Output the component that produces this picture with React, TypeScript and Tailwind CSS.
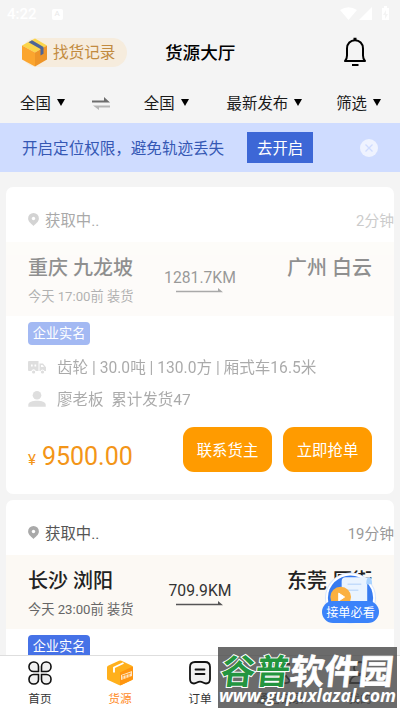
import type { ReactNode } from "react";
import { clsx } from "clsx";

interface Order {
  id: number;
  age: string;
  from: string;
  to: string;
  distance: string;
  loading: string;
  cargo?: string;
  owner?: string;
  price?: string;
  viewed: boolean;
}

const ORDERS: Order[] = [
  {
    id: 1, age: "2分钟", from: "重庆 九龙坡", to: "广州 白云", distance: "1281.7KM", loading: "今天 17:00前 装货",
    cargo: "齿轮 | 30.0吨 | 130.0方 | 厢式车16.5米", owner: "廖老板  累计发货47", price: "9500.00", viewed: true,
  },
  {
    id: 2, age: "19分钟", from: "长沙 浏阳", to: "东莞 厚街", distance: "709.9KM", loading: "今天 23:00前 装货",
    viewed: false,
  },
];

function StatusBar() {
  return (
    <div className="flex h-7 shrink-0 items-center pr-2 pl-[7px] text-white">
      <span className="text-[15px] leading-7 font-medium">4:22</span>
      <span className="ml-[15px] flex h-[11px] w-[11px] items-center justify-center rounded-[2px] bg-white text-[8px] text-[#e8e8e8]">A</span>
      <svg viewBox="0 0 52 16" className="ml-auto h-4 w-[52px]" fill="currentColor">
        <path d="M0 4Q8.500-1.500 17 4L8.500 14Z" />
        <path d="M32 1v13H19Z" />
        <path d="M42 2h2V0h3v2h2v12h-7Z" />
        <path d="m46 4-3 5h2v4l3-5h-2Z" fill="#f4f4f4" />
      </svg>
    </div>
  );
}

function BoxIcon() {
  return (
    <svg viewBox="0 0 26 29" className="h-[29px] w-[26px]">
      <path d="m13 .5 12 7-12 7-13-7Z" fill="#fbd54a" />
      <path d="m0 7.500 13 7v14l-13-7Z" fill="#fba52e" />
      <path d="m25 7.500-12 7v14l12-7Z" fill="#ee9528" />
      <path d="m10 2.200-3.500 2L18.500 11v6.500l3-1.700V9Z" fill="#4e6596" />
    </svg>
  );
}

function BellIcon() {
  return (
    <svg viewBox="0 0 24 30" className="h-[30px] w-6" fill="none" stroke="#000" strokeWidth="2">
      <path d="M10.500 1.800h3M9 28h6.500" strokeWidth="2.200" />
      <path d="M2 24h20c-1.500-1.500-2-3.500-2-5.500v-7C20 6.500 16.500 3.200 12 3.200S4 6.500 4 11.500v7C4 20.500 3.500 22.500 2 24Z" strokeLinejoin="round" />
    </svg>
  );
}

function PinIcon() {
  return (
    <svg viewBox="0 0 11 13" className="h-[13px] w-[11px]">
      <path d="M5.500 0a5.400 5.400 0 0 1 5.400 5.500C10.900 9 7 11 5.500 13 4 11 .1 9 .1 5.500A5.400 5.400 0 0 1 5.500 0Z" fill="#a9a9a9" />
      <circle cx="5.500" cy="5.500" r="1.700" fill="#fff" />
    </svg>
  );
}

function TruckIcon() {
  return (
    <svg viewBox="0 0 18 14" className="h-[14px] w-[18px]" fill="#bcbcbc">
      <path d="M1 1h9.500v10H7.800a2.300 2.300 0 0 0-4.400 0H1a1 1 0 0 1-1-1V2a1 1 0 0 1 1-1Z" />
      <path d="M11.500 3.500H15l3 3.800V11h-1.600a2 2 0 0 0-3.900 0h-1Z" />
      <circle cx="5.600" cy="12" r="1.600" />
      <circle cx="14.500" cy="12" r="1.600" />
      <path d="M3 4.500h1.700v2H3ZM6.500 4.500h1.700v2H6.500ZM13 5h1.500l1.500 2h-3Z" fill="#fff" />
    </svg>
  );
}

function UserIcon() {
  return (
    <svg viewBox="0 0 18 16" className="h-4 w-[18px]" fill="#bcbcbc">
      <circle cx="9" cy="4.300" r="4.300" />
      <path d="M.3 15.800v-2C.3 11 4.500 9.800 9 9.800s8.700 1.200 8.700 4v2Z" />
    </svg>
  );
}

function FilterItem({ label, className }: { label: string; className?: string }) {
  return (
    <div className={clsx("flex items-center gap-[6px]", className)}>
      <span className="pt-[5px] text-[15.400px] text-[#1a1a1a]">{label}</span>
      <svg viewBox="0 0 8 7" className="h-[7px] w-2"><path d="M0 0h8L4 7Z" /></svg>
    </div>
  );
}

function OrderCard({ order }: { order: Order }) {
  const dim = order.viewed && "opacity-50";
  return (
    <div className="h-[307px] shrink-0 overflow-hidden rounded-[7px] bg-white">
      <div className={clsx("flex h-[55px] items-center pt-[10px] pl-[22px] text-[15.400px]", dim)}>
        <PinIcon />
        <span className="ml-[6px] pt-[5px] text-[#555]">获取中..</span>
        <span className="ml-auto pt-[3px] text-[14.800px] text-[#999]">{order.age}</span>
      </div>
      <div className={clsx("flex h-[74px] bg-[#fcf9f4] pr-[22px] pl-[22px]", dim)}>
        <div className="w-[126px] pt-[12px]">
          <p className="text-[20px] leading-7 font-medium whitespace-nowrap text-[#222]">{order.from}</p>
          <p className="mt-[3px] text-[13.200px] leading-6 whitespace-nowrap text-[#666]">{order.loading}</p>
        </div>
        <div className="flex w-[92px] flex-col items-center pt-[26px]">
          <span className="text-[15.700px] leading-5 text-[#333]">{order.distance}</span>
          <svg viewBox="0 0 47 5" className="mr-[2px] h-[5px] w-[47px]"><path d="M0 2.800h42V0l5 4.300H0Z" fill="#555" /></svg>
        </div>
        <p className="ml-auto pt-[12px] text-[20px] leading-7 font-medium whitespace-nowrap text-[#222]">{order.to}</p>
      </div>
      <div className="pr-[22px] pl-[22px]">
        <div className={clsx("pt-[6px]", dim)}>
          <div className="flex h-[23px] w-[62px] items-center justify-center rounded-[4px] bg-[#4672e7] pt-px text-[13.200px] text-white">企业实名</div>
          {order.cargo && (
            <div className="mt-[6px] flex h-8 items-center gap-[11px] text-[15.600px] whitespace-pre text-[#555]">
              <TruckIcon />
              <span className="pt-1">{order.cargo}</span>
            </div>
          )}
          {order.owner && (
            <div className="flex h-8 items-center gap-[11px] text-[15.500px] whitespace-pre text-[#555]">
              <UserIcon />
              <span className="pt-1">{order.owner}</span>
            </div>
          )}
        </div>
        {order.price && (
          <div className="mt-[12px] flex h-[45px] items-center gap-[11px]">
            <p className="flex items-baseline gap-[6px] pt-[15px] text-[#f39518]">
              <span className="text-[15px]">¥</span>
              <span className="text-[25px] leading-8">{order.price}</span>
            </p>
            <button className="ml-auto h-[45px] w-[89px] rounded-[11px] bg-[#ff9b00] pt-1 text-[15.400px] text-white">联系货主</button>
            <button className="h-[45px] w-[89px] rounded-[11px] bg-[#ff9b00] pt-1 text-[15.400px] text-white">立即抢单</button>
          </div>
        )}
      </div>
    </div>
  );
}

function NavItem({ label, active, children }: { label: string; active?: boolean; children: ReactNode }) {
  return (
    <div className="flex flex-1 flex-col items-center pt-[4px]">
      {children}
      <span className={clsx("mt-[5px] text-[11.700px] leading-4", active ? "text-[#ff8b1f]" : "text-[#333]")}>{label}</span>
    </div>
  );
}

function BottomNav() {
  return (
    <div className="flex h-[56px] shrink-0 border-t border-[#dedede] bg-white">
      <NavItem label="首页">
        <svg viewBox="0 0 26 26" className="h-[26px] w-[26px]" fill="#f1f1f1" stroke="#111" strokeWidth="1.600">
          <path d="M11.500 11.500V6.500A4.500 4.500 0 0 0 7 2H6.500A4.500 4.500 0 0 0 2 6.500V7a4.500 4.500 0 0 0 4.500 4.500Z" />
          <path d="M14.500 11.500V6.500A4.500 4.500 0 0 1 19 2h.5A4.500 4.500 0 0 1 24 6.500V7a4.500 4.500 0 0 1-4.500 4.500Z" />
          <path d="M11.500 14.500v5A4.500 4.500 0 0 1 7 24h-.5A4.500 4.500 0 0 1 2 19.500V19a4.500 4.500 0 0 1 4.500-4.500Z" />
          <path d="M14.500 14.500v5A4.500 4.500 0 0 0 19 24h.5a4.500 4.500 0 0 0 4.500-4.500V19a4.500 4.500 0 0 0-4.500-4.500Z" />
        </svg>
      </NavItem>
      <NavItem label="货源" active>
        <svg viewBox="0 0 28 26" className="h-[26px] w-7">
          <path d="M13 .7q1.200-.6 2.400 0L26 5.800q1 .5 1 1.600v11q0 1.100-1 1.600L15.300 25q-1.200.6-2.400 0L2 20q-1-.5-1-1.600v-11q0-1.100 1-1.600Z" fill="#ffb01c" />
          <path d="m1.500 6.500 12.500 6 12.600-6q.4.400.4 1v11q0 1-1 1.500L15.300 25q-.7.300-1.300.3V12.500Z" fill="#ff9510" />
          <path d="m17.500 3-9.500 4.500v5" fill="none" stroke="#fff" strokeWidth="1.900" />
          <path d="m15 15 11-4v5l-11 4Z" fill="#fff" opacity=".75" />
          <path d="m17 15 0 4m3-5v4m3-5v4m-7-1 9-3" stroke="#ff9510" strokeWidth=".8" />
        </svg>
      </NavItem>
      <NavItem label="订单">
        <svg viewBox="0 0 24 26" className="h-[26px] w-6" fill="none" stroke="#111" strokeWidth="1.800">
          <path d="M7 2h10q5 0 5 5v12q0 4.500-4 4.500c-3 0-3-1.800-6-1.800s-3 1.800-6 1.800q-4 0-4-4.500V7q0-5 5-5Z" fill="#f1f1f1" />
          <path d="M7.500 9.500h9M7.500 14h9" strokeLinecap="round" />
        </svg>
      </NavItem>
      <NavItem label="通话记录">
        <svg viewBox="0 0 26 26" className="h-[26px] w-[26px]" fill="none" stroke="#111" strokeWidth="1.800">
          <path d="M5 3c-4 4-1 10 4 15s11 7 14 3l-4-5-4 2-6-7 2-4-4-4Z" />
          <path d="M16 4h7M18 9h5" />
        </svg>
      </NavItem>
      <NavItem label="我的">
        <svg viewBox="0 0 26 26" className="h-[26px] w-[26px]" fill="none" stroke="#111" strokeWidth="1.800">
          <circle cx="13" cy="8" r="6" />
          <path d="M3 23c0-5 4-8 10-8s10 3 10 8Z" />
        </svg>
      </NavItem>
    </div>
  );
}

function GuideBadge() {
  return (
    <div className="absolute top-[571px] left-[322px] h-[55px] w-[57px]">
      <svg viewBox="0 0 58 55" className="h-[55px] w-[57px]">
        <circle cx="29" cy="27" r="26" fill="#d6e6ff" />
        <circle cx="29" cy="27" r="25" fill="#fff" />
        <circle cx="29" cy="27" r="23" fill="#377bf0" />
        <path d="M24 6h26q-4 1-4 7v22H20V10q0-4 4-4Z" fill="#eaf4ff" />
        <path d="M45 13q0-7 3-7t3 7Z" fill="#a9d3ff" />
        <path d="M26 13h14M26 19h11" stroke="#c3dcfb" strokeWidth="1.500" />
        <circle cx="19" cy="26" r="10.500" fill="#fbb040" />
        <path d="m17 22 6 4-6 4Z" fill="#fff" stroke="#fff" strokeLinejoin="round" />
      </svg>
      <span className="absolute top-[30px] left-0 flex h-[22px] w-[57px] items-center justify-center rounded-full bg-[#3b83fa] pt-[2px] text-[12.200px] whitespace-nowrap text-white">
        接单必看
      </span>
    </div>
  );
}

function Watermark() {
  return (
    <div className="absolute top-[647px] left-[218px] flex h-[61px] w-[179px] flex-col items-center bg-[#464646]/80 font-bold whitespace-nowrap">
      <p className="mt-[4px] -skew-x-6 text-[34.500px] leading-[42px] font-bold text-white">
        <span className="text-[#23953f] [-webkit-text-stroke:2px_#fff] [paint-order:stroke_fill]">谷普</span>
        <span className="[-webkit-text-stroke:0.600px_#fff]">软件园</span>
      </p>
      <p className="-mt-[10px] font-['Open_Sans'] text-[17.700px] leading-6 text-white italic">www.gupuxlazal.com</p>
    </div>
  );
}

export default function App() {
  return (
    <div className="relative flex h-[711px] w-[400px] flex-col overflow-hidden bg-[#f4f4f4] font-[Roboto,'Noto_Sans_CJK_SC',sans-serif]">
      <StatusBar />
      <header className="flex h-[48px] shrink-0 items-center pr-[33px] pl-[22px]">
        <div className="flex h-[29px] w-[105px] items-center rounded-full bg-[#f6ecdd]">
          <BoxIcon />
          <span className="ml-[5px] pt-1 text-[15.600px] text-[#c28b40]">找货记录</span>
        </div>
        <h1 className="ml-[38px] pt-[2px] text-[17.600px] font-medium text-black">货源大厅</h1>
        <span className="ml-auto"><BellIcon /></span>
      </header>
      <div className="flex h-[47px] shrink-0 items-center pt-[6px] pr-[19px] pl-5">
        <FilterItem label="全国" />
        <svg viewBox="0 0 18 13" className="mt-[2px] ml-[27px] h-[13px] w-[18px]">
          <path d="M0 3.500h12V0l6 5.500H0Z" fill="#6d6d6d" />
          <path d="M18 8.500H1l6 4.500v-2.500h11Z" fill="#b5b5b5" />
        </svg>
        <FilterItem label="全国" className="ml-[34px]" />
        <FilterItem label="最新发布" className="ml-[38px]" />
        <FilterItem label="筛选" className="ml-auto" />
      </div>
      <div className="flex h-[49px] shrink-0 items-center bg-[#cfdcff] px-[22px]">
        <span className="pt-1 text-[15.550px] text-[#3558b4]">开启定位权限，避免轨迹丢失</span>
        <button className="ml-[23px] h-[31px] w-[66px] bg-[#3d67d6] pt-1 text-[15.400px] text-white">去开启</button>
        <svg viewBox="0 0 18 18" className="ml-auto h-[18px] w-[18px]">
          <circle cx="9" cy="9" r="9" fill="#eff3ff" />
          <path d="m5.500 5.500 7 7m0-7-7 7" stroke="#cfdcff" strokeWidth="1.300" />
        </svg>
      </div>
      <main className="flex min-h-0 flex-1 flex-col gap-[6px] overflow-hidden px-[6px] pt-[15px]">
        {ORDERS.map((o) => <OrderCard key={o.id} order={o} />)}
      </main>
      <BottomNav />
      <GuideBadge />
      <Watermark />
    </div>
  );
}
